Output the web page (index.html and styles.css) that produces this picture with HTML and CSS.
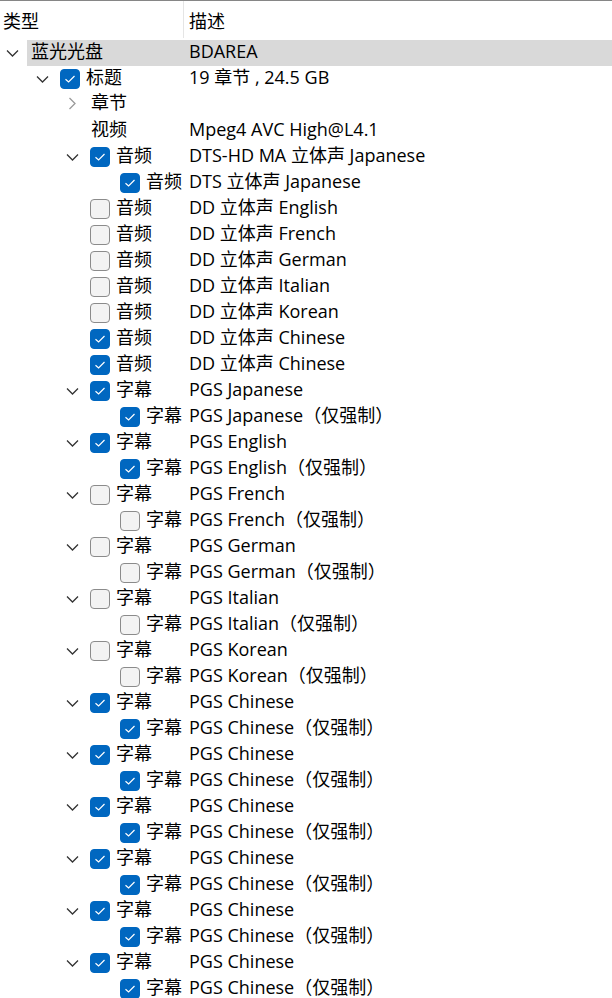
FILE: index.html
```html
<!DOCTYPE html>
<html>
<head>
	<meta charset="utf-8">
	<title>Tree</title>
	<link rel="stylesheet" href="styles.css">
</head>
<body>

	<div class="tree">
		<div class="head">
			<div class="col type">类型</div>
			<div class="col desc">描述</div>
		</div>
		<div class="rows" id="rows"></div>
	</div>

	<script type="text/javascript">

		// level, arrow (d = open, r = closed), check (1 / 0 / null), type, desc
		let data = [
			[0,"d",null,"蓝光光盘","BDAREA",true],
			[1,"d",1,"标题","19 章节 , 24.5 GB"],
			[2,"r",null,"章节",""],
			[2,"",null,"视频","Mpeg4 AVC High@L4.1"],
			[2,"d",1,"音频","DTS-HD MA 立体声 Japanese"],
			[3,"",1,"音频","DTS 立体声 Japanese"],
			[2,"",0,"音频","DD 立体声 English"],
			[2,"",0,"音频","DD 立体声 French"],
			[2,"",0,"音频","DD 立体声 German"],
			[2,"",0,"音频","DD 立体声 Italian"],
			[2,"",0,"音频","DD 立体声 Korean"],
			[2,"",1,"音频","DD 立体声 Chinese"],
			[2,"",1,"音频","DD 立体声 Chinese"]
		];

		let subs = [
			["Japanese",1],["English",1],["French",0],["German",0],["Italian",0],["Korean",0],
			["Chinese",1],["Chinese",1],["Chinese",1],["Chinese",1],["Chinese",1],["Chinese",1]
		];

		subs.forEach(s=>{
			data.push([2,"d",s[1],"字幕","PGS "+s[0]]);
			data.push([3,"",s[1],"字幕","PGS "+s[0]+"（仅强制）"]);
		});

		let arrows = {
			d: `<svg width="13" height="8" viewBox="0 0 13 8"><path d="M1 1.5 L6.5 7 L12 1.5" fill="none" stroke="#333" stroke-width="1.3"/></svg>`,
			r: `<svg width="8" height="13" viewBox="0 0 8 13"><path d="M1.5 1 L7 6.5 L1.5 12" fill="none" stroke="#9a9a9a" stroke-width="1.3"/></svg>`
		};

		let tick = `<svg width="12" height="10" viewBox="0 0 12 10"><path d="M1.5 5.2 L4.6 8 L10.5 2" fill="none" stroke="#fff" stroke-width="1.2"/></svg>`;

		let html = "";
		data.forEach(d=>{
			let box = "";
			if(d[2] !== null){
				box = `<span class="box ${d[2] ? 'on' : ''}">${d[2] ? tick : ''}</span>`;
			}
			html += `
			<div class="row">
				<div class="cell type" style="padding-left:${d[0]*30}px">
					<span class="arrow">${arrows[d[1]] || ""}</span>
					<span class="item ${d[5] ? 'sel' : ''}">${box}<span class="label">${d[3]}</span></span>
				</div>
				<div class="cell desc"><span class="label">${d[4]}</span></div>
			</div>`;
		});

		document.querySelector("#rows").innerHTML = html;

	</script>

</body>
</html>
```

FILE: styles.css
```css
*{
	box-sizing: border-box;
}
html,body{
	width: 100%;
	height: 100%;
}
body{
	margin: 0px;
	background: white;
	color: #000;
	font-family: "Open Sans", "Noto Sans CJK SC", sans-serif;
	font-size: 18px;
	overflow: hidden;
}

.tree{
	width: 100%;
	border-top: 1px solid #868686;
}

.head{
	display: grid;
	grid-template-columns: 184px 1fr;
	height: 37px;
}

.head .col{
	display: flex;
	align-items: center;
}

.head .type{
	padding-left: 3px;
	border-right: 1px solid #e5e5e5;
}

.head .desc{
	padding-left: 5px;
}

.row{
	display: grid;
	grid-template-columns: 184px 1fr;
	height: 26px;
	white-space: nowrap;
}

.cell{
	display: flex;
	align-items: center;
}

.cell.desc{
	padding-left: 5px;
}

.label{
	line-height: 26px;
	padding-bottom: 3px;
}

.arrow{
	width: 24px;
	height: 26px;
	flex-shrink: 0;
	display: flex;
	justify-content: center;
	align-items: center;
}

.item{
	display: flex;
	align-items: center;
	height: 26px;
	margin-left: 3px;
	padding-left: 4px;
}

.item.sel{
	background: #d9d9d9;
	flex: 1;
	margin-right: -440px;
}

.box{
	width: 20px;
	height: 20px;
	border-radius: 4px;
	border: 1px solid #8b8b8b;
	background: #f3f3f3;
	margin-left: -1px;
	margin-right: 6px;
	display: flex;
	justify-content: center;
	align-items: center;
	flex-shrink: 0;
}

.box.on{
	background: #0067c0;
	border-color: #0067c0;
}
```
